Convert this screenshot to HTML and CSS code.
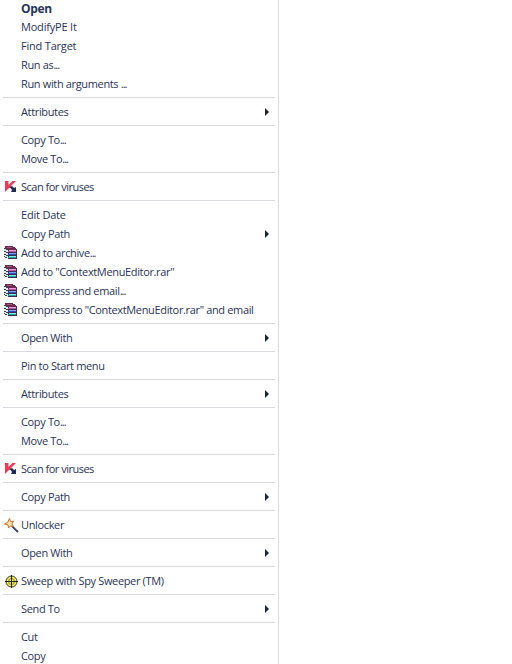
FILE: index.html
```html
<!DOCTYPE html>
<html lang="en">
<head>
    <meta charset="UTF-8">
    <meta name="viewport" content="width=device-width, initial-scale=1.0">
    <title>Context Menu</title>
    <link rel="stylesheet" href="styles.css">
</head>
<body>
    <svg class="sprites" width="0" height="0">
        <symbol id="kav" viewBox="0 0 12 12">
            <path d="M0 0h3.500v4l4-4H11L6 5v2H4L0 11z" fill="#ee3a55"/>
            <path d="M5 6l2-1 2 2 2-1v5H6l1-2z" fill="#1d2b55"/>
        </symbol>
        <symbol id="rar" viewBox="0 0 13 13" shape-rendering="crispEdges">
            <path d="M0 2l4 2v9l-4-3z" fill="#dfe8e6"/>
            <path d="M1 0h8v1h2v1h1v1h1v1H4V3H2V2H1z" fill="#6d2a50"/>
            <path d="M3 1h5v1H3z" fill="#a4577c"/>
            <path d="M0 2h2v1h2v1H2V3H0zM0 5h2v1h2v1H2V6H0zM0 8h2v1h2v1H2V9H0zM0 10h1v1h2v1H1z" fill="#35474d"/>
            <path d="M4 4h9v9H4z" fill="#3a2c5c"/>
            <path d="M5 4h7v1H5z" fill="#ee9bd8"/>
            <path d="M4 5h8v1H4z" fill="#b8529f"/>
            <path d="M5 7h7v1H5z" fill="#7fa0ee"/>
            <path d="M4 8h8v1H4z" fill="#2f4db5"/>
            <path d="M5 10h7v1H5z" fill="#7cf0df"/>
            <path d="M4 11h8v1H4z" fill="#22aaa0"/>
        </symbol>
        <symbol id="wand" viewBox="0 0 15 15">
            <path d="M7.500 7.500l6.500 6.500" stroke="#3d4056" stroke-width="2"/>
            <path d="M8 7l5 5" stroke="#9a9cb0" stroke-width=".7"/>
            <path d="M5.500.5l1 3 3-.5-1.500 3 1.500 2.500-3-.5-2 2-.5-3-3.500-1 3-1.500z" fill="#ffe3a1" stroke="#c8702f" stroke-width="1"/>
        </symbol>
        <symbol id="globe" viewBox="0 0 13 13">
            <circle cx="6.500" cy="6.500" r="5.500" fill="#f3e75c" stroke="#35351f"/>
            <circle cx="6.500" cy="6.500" r="3" fill="none" stroke="#77742e" stroke-width=".8"/>
            <path d="M6.500 0v13M0 6.500h13" stroke="#22242c"/>
        </symbol>
    </svg>

    <div class="menu">
        <div class="item default">Open</div>
        <div class="item wide">ModifyPE It</div>
        <div class="item wide">Find Target</div>
        <div class="item">Run as<span class="dots">...</span></div>
        <div class="item">Run with arguments <span class="dots">...</span></div>
        <hr>
        <div class="item submenu">Attributes</div>
        <hr>
        <div class="item">Copy To<span class="dots">...</span></div>
        <div class="item">Move To<span class="dots">...</span></div>
        <hr>
        <div class="item narrow"><svg class="icon kav"><use href="#kav"/></svg>Scan for viruses</div>
        <hr>
        <div class="item wide">Edit Date</div>
        <div class="item submenu">Copy Path</div>
        <div class="item"><svg class="icon"><use href="#rar"/></svg>Add to archive<span class="dots">...</span></div>
        <div class="item"><svg class="icon"><use href="#rar"/></svg>Add to "ContextMenuEditor.rar"</div>
        <div class="item"><svg class="icon"><use href="#rar"/></svg>Compress and email<span class="dots">...</span></div>
        <div class="item"><svg class="icon"><use href="#rar"/></svg>Compress to "ContextMenuEditor.rar" and email</div>
        <hr>
        <div class="item submenu">Open With</div>
        <hr>
        <div class="item">Pin to Start menu</div>
        <hr>
        <div class="item submenu">Attributes</div>
        <hr>
        <div class="item">Copy To<span class="dots">...</span></div>
        <div class="item">Move To<span class="dots">...</span></div>
        <hr>
        <div class="item narrow"><svg class="icon kav"><use href="#kav"/></svg>Scan for viruses</div>
        <hr>
        <div class="item submenu">Copy Path</div>
        <hr>
        <div class="item"><svg class="icon wand"><use href="#wand"/></svg>Unlocker</div>
        <hr>
        <div class="item submenu">Open With</div>
        <hr>
        <div class="item"><svg class="icon globe"><use href="#globe"/></svg>Sweep with Spy Sweeper (TM)</div>
        <hr>
        <div class="item submenu">Send To</div>
        <hr>
        <div class="item">Cut</div>
        <div class="item">Copy</div>
    </div>
</body>
</html>
```

FILE: styles.css
```css
body {
    margin: 0;
    height: 664px;
    overflow: hidden;
    background-color: #fff;
    font-family: "Open Sans", "Noto Sans", sans-serif;
    font-size: 11px;
    letter-spacing: -0.35px;
    color: #2a3558;
}

.sprites {
    position: absolute;
}

.menu {
    width: 278px;
    margin-top: -1px;
    border-right: 1px solid #d9dadd;
}

.item {
    display: flex;
    align-items: center;
    position: relative;
    box-sizing: border-box;
    height: 19px;
    padding-left: 21px;
    padding-bottom: 2px;
    line-height: 17px;
    white-space: pre;
}

.default {
    padding-bottom: 0;
    font-size: 12px;
    font-weight: bold;
}

.wide {
    letter-spacing: -0.2px;
}

.narrow {
    letter-spacing: -0.5px;
}

.dots {
    letter-spacing: -1px;
}

/* arrow on the right */
.submenu::after {
    content: "";
    margin-left: auto;
    margin-right: 9px;
    border: 4px solid transparent;
    border-left: 4px solid #1c2438;
    border-right: 0;
}

.icon {
    position: absolute;
    top: 2px;
    left: 4px;
    width: 13px;
    height: 13px;
}

.kav {
    top: 3px;
    left: 5px;
    width: 12px;
    height: 12px;
}

.wand {
    width: 15px;
    height: 15px;
}

.globe {
    top: 3px;
    left: 5px;
}

hr {
    height: 1px;
    margin: 3px 3px 5px 3px;
    border: 0;
    background-color: #d9dadd;
}
```
